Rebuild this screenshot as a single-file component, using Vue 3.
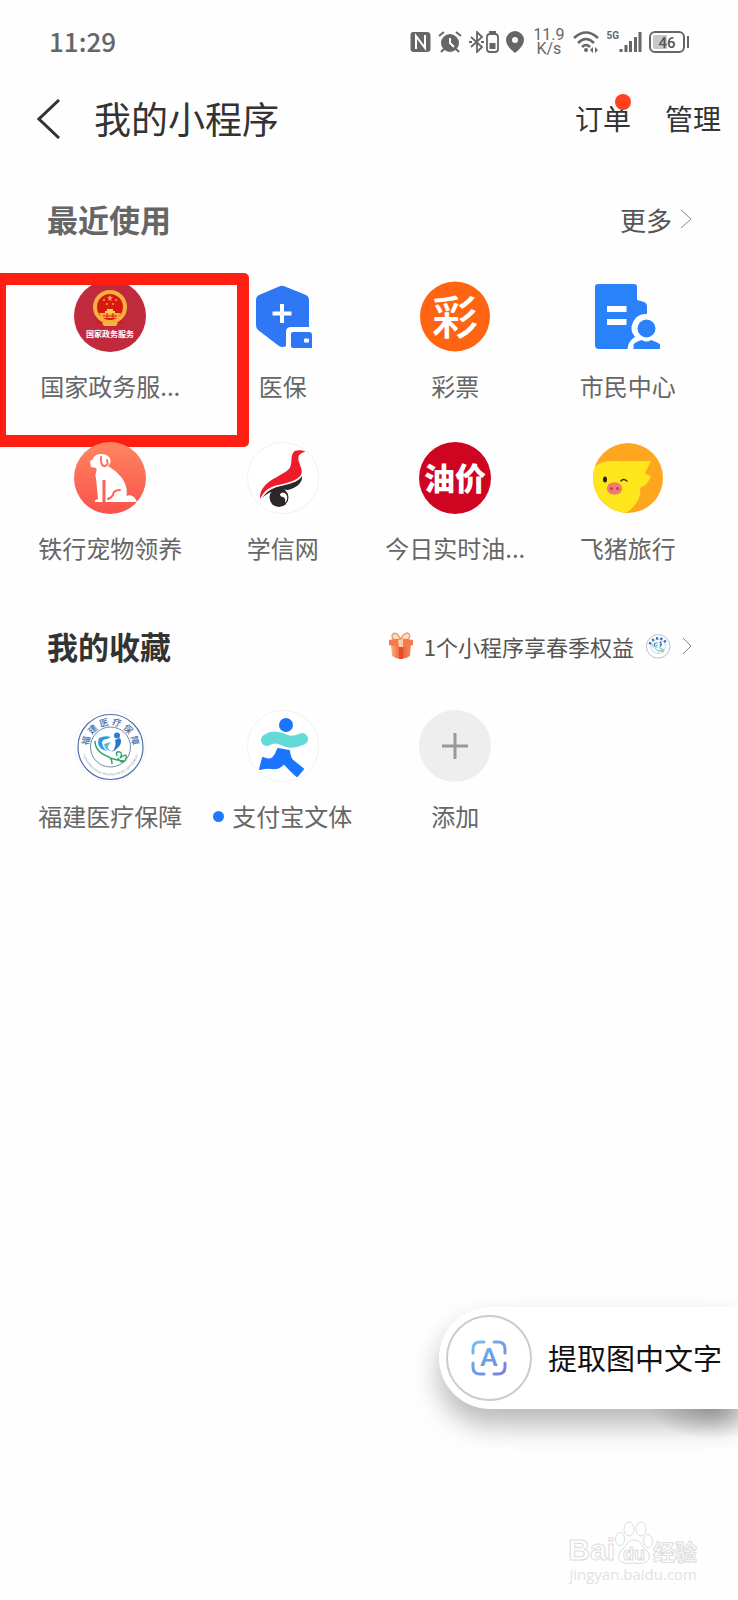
<script setup>
const recent = [
  { icon: 'gov', name: '国家政务服...', marked: true, text: '国家政务服务', x: 36, y: 57 },
  { icon: 'medical', name: '医保' },
  { icon: 'lottery', name: '彩票', text: '彩', x: 36, y: 54 },
  { icon: 'citizen', name: '市民中心' },
  { icon: 'pet', name: '铁行宠物领养' },
  { icon: 'xuexin', name: '学信网' },
  { icon: 'oil', name: '今日实时油...', text: '油价', x: 36, y: 48 },
  { icon: 'fliggy', name: '飞猪旅行' },
]
const favorites = [
  { icon: 'seal', name: '福建医疗保障' },
  { icon: 'sport', name: '支付宝文体', dot: true },
  { icon: 'add', name: '添加' },
]
const sealChars = [...'福建医疗保障'].map((c, i) => ({ c, angle: -75 + i * 30 }))
</script>

<template>
  <div class="page">
    <svg class="sprite" width="0" height="0" aria-hidden="true">
      <defs>
        <linearGradient id="petFill" x1="0" y1="0" x2="0" y2="1">
          <stop offset="0" stop-color="#ff8562" /><stop offset="1" stop-color="#f9524b" />
        </linearGradient>
        <linearGradient id="scanFill" gradientUnits="userSpaceOnUse" x1="0" y1="0" x2="30" y2="36">
          <stop offset="0" stop-color="#7fc4ea" /><stop offset="0.5" stop-color="#6ba0e8" /><stop offset="1" stop-color="#7f80d8" />
        </linearGradient>
        <linearGradient id="giftFill" x1="0" y1="0" x2="1" y2="0">
          <stop offset="0" stop-color="#f9b183" /><stop offset="0.5" stop-color="#ef5a35" /><stop offset="1" stop-color="#f58a62" />
        </linearGradient>
        <clipPath id="fliggyClip"><circle cx="36" cy="36" r="35" /></clipPath>
      </defs>

      <symbol id="gov" viewBox="0 0 72 72">
        <circle cx="36" cy="36" r="36" fill="#c02a3c" />
        <path d="M24 38 L22 44 L28 43 L31 46 H41 L44 43 L50 44 L48 38Z" fill="#cf1f1c" />
        <circle cx="36" cy="27" r="15" fill="#d8190f" stroke="#f7b13c" stroke-width="4" />
        <path d="M25 33 H47 L44 38 H28Z" fill="#f7b13c" />
        <path d="M31 33 V31 H33 V29 H39 V31 H41 V33Z" fill="#ffd34e" />
        <path d="M29 36 H43 M33 33 V39 M39 33 V39" stroke="#d8190f" stroke-width="1" />
        <path d="M28 43 Q32 40 36 43 Q40 40 44 43 L42 46 H30Z" fill="#f7b13c" />
        <path d="M36 15 l1 2 h2 l-2 2 1 2 -2-1 -2 1 1-2 -2-2 h2z" fill="#f9a23a" />
        <g fill="#f9a23a"><circle cx="30" cy="20" r="1" /><circle cx="42" cy="20" r="1" /><circle cx="33" cy="24" r="1" /><circle cx="39" cy="24" r="1" /></g>
      </symbol>

      <symbol id="medical" viewBox="0 0 72 72">
        <path d="M32 6.500 Q35 5 38 6.500 L59 15 Q62 16.500 62 20 V47 H44 Q39 47 39 52 V66 Q35 68 32 66 L11 50 Q9 48 9 45 V20 Q9 16.500 12 15Z" fill="#2f77f5" />
        <path d="M35 24 V43 M25.500 33.500 H44.500" stroke="#fff" stroke-width="4" />
        <path d="M46 52 H62 Q65 52 65 55 V68 H46 Q44 68 44 66 V54 Q44 52 46 52Z" fill="#2f77f5" />
        <rect x="57" y="58.500" width="5" height="4" rx="1" fill="#fff" />
      </symbol>

      <symbol id="lottery" viewBox="0 0 72 72">
        <circle cx="36" cy="36.500" r="35" fill="#fe6411" />
      </symbol>

      <symbol id="citizen" viewBox="0 0 72 72">
        <path d="M6 4 H42 Q45 4 45 7 V20 L52 22 Q55 23 55 27 V34 A14 14 0 0 0 43 57 Q36 61 35.500 69 H7 Q3 69 3 65 V7 Q3 4 6 4Z" fill="#2a82fb" />
        <path d="M15 26 H34.500 V32 H15Z M15 39 H34.500 V45 H15Z" fill="#fff" />
        <circle cx="54.500" cy="48.500" r="9" fill="#2a82fb" />
        <path d="M41.500 69 V65 Q41.500 64 43 63 Q47 60.500 50 60 Q54.500 63 59 60 Q63 61 67 63.500 Q68 64 68 65 V69Z" fill="#2a82fb" />
      </symbol>

      <symbol id="pet" viewBox="0 0 72 72">
        <circle cx="36" cy="36" r="36" fill="url(#petFill)" />
        <path d="M16 19 L19 17 C20 13.500 23 12 27 12 C33 12 37 15 36.500 20 C36 22 35 23 34 24 C42 29 49 35 51.500 43 C53 47 53 50 52.500 54 C57 52 61 55 63 60 H21 Q20 58 24 57 L22 36 C20 32 24 29 22 26 L17 25Z" fill="#fff" />
        <path d="M27 15 Q26 24 31 24 Q35 23 33 18" fill="none" stroke="#ff7159" stroke-width="2" stroke-linecap="round" />
        <path d="M30 38 V60" stroke="#fb6254" stroke-width="3" />
        <path d="M46 48 Q39 48 39 53 Q38 55 34 57" fill="none" stroke="#fb6254" stroke-width="2" stroke-linecap="round" />
      </symbol>

      <symbol id="xuexin" viewBox="0 0 72 72">
        <circle cx="36" cy="36" r="35.500" fill="#fff" stroke="#f1f1f1" />
        <path d="M58.500 9.500 C54 8 48 7.500 46 11 C43 16 46 22 42 27 C36 33 22 37 16 46 C13 50 13 54 13 57 C17 49 22 45 31 43 C40 41 50 39 54 33 C57 27 50 20 51.500 15 C52 12 55 11 58.500 9.500Z" fill="#ed1c28" />
        <path d="M15 56 C22 46 30 45 38 43 C46 41 52 39 55 34 C56 40 50 46 41 48 C32 47 22 49 15 56Z" fill="#2b2628" />
        <circle cx="32" cy="55.500" r="9.500" fill="#2b2628" />
        <path d="M33 52 Q36 49 39 52 Q42 56 38 61 Q39 56 36 55 Q33 55 33 52Z" fill="#fff" />
      </symbol>

      <symbol id="oil" viewBox="0 0 72 72">
        <circle cx="36" cy="36" r="36" fill="#cf0420" />
      </symbol>

      <symbol id="fliggy" viewBox="0 0 72 72">
        <g clip-path="url(#fliggyClip)">
          <rect width="72" height="72" fill="#ffa61f" />
          <path d="M0 29 Q4 20 18 19 Q40 19 59 19 L53 31 Q56 34 59 34 Q56 43 48 46 C50 55 43 66 32 72 H0Z" fill="#fee51c" />
        </g>
        <ellipse cx="13" cy="37.500" rx="2" ry="3" fill="#222" />
        <path d="M29 39 Q31 36 35 39" fill="none" stroke="#332" stroke-width="1.500" stroke-linecap="round" />
        <rect x="15" y="40.500" width="15" height="12" rx="6" fill="#ee7a72" />
        <circle cx="19.500" cy="46.500" r="1.500" fill="#c34340" /><circle cx="25.500" cy="46.500" r="1.500" fill="#c34340" />
      </symbol>

      <symbol id="seal" viewBox="0 0 72 72">
        <circle cx="36" cy="36" r="35.500" fill="#fff" stroke="#f1f5fa" />
        <circle cx="36.500" cy="37" r="32.500" fill="none" stroke="#4d70a8" stroke-width="1.200" />
        <circle cx="36.500" cy="37" r="20" fill="none" stroke="#7188a8" />
        <path d="M25 28 Q31 25 37 27 L33 29 Q29 29 28 32 Q28 37 33 41 Q24 39 24 32Z" fill="#2c9ae4" />
        <path d="M30 34 L37 32 L34 36 Q33 39 37 41 Q31 41 30 34Z" fill="#58b6ee" />
        <circle cx="43" cy="25.500" r="3" fill="#2580d8" />
        <path d="M46 28 Q50 35 38 42 Q43 36 41 30Z" fill="#2f74cc" />
        <path d="M21 31 Q21 42 35 47 Q38 49 38 54 M36 48 Q42 50 50 51 M43 46 Q41 41 46 42 Q49 44 46 48 Q55 41 51 51 Q47 54 44 48" fill="none" stroke="#2fa866" stroke-width="1.500" />
      </symbol>

      <symbol id="sport" viewBox="0 0 72 72">
        <circle cx="36" cy="36" r="35.500" fill="#fff" stroke="#f1f1f1" />
        <circle cx="39" cy="15" r="7" fill="#1a75ff" />
        <path d="M20 30 C28 25 34 29 40 31 Q47 33 55 29" fill="none" stroke="#63d9d8" stroke-width="12" stroke-linecap="round" />
        <path d="M31 39 L42 41 Q43 49 46 51 L56 59 L50 66 Q45 62 37 53 Q32 59 25 58 Q20 57 13 59 L16 48 Q22 51 26 48 Q29 45 31 39Z" fill="#1a75ff" stroke="#1a75ff" stroke-width="2" stroke-linejoin="round" />
      </symbol>

      <symbol id="add" viewBox="0 0 72 72">
        <circle cx="36" cy="36" r="36" fill="#eee" />
        <path d="M36 23 V49 M23 36 H49" stroke="#999" stroke-width="3" />
      </symbol>
    </svg>

    <div class="status">
      <time class="clock">11:29</time>
      <div class="indicators">
        <svg width="21" height="22" viewBox="0 0 21 22">
          <path d="M3 1 H17 Q20.500 1 20.500 5 V18 Q20.500 21 17 21 H4 Q0.500 21 0.500 18 V4 Q0.500 1 3 1Z" fill="#666" />
          <path d="M6 18 V5 L15 17 V4" fill="none" stroke="#fff" stroke-width="2" />
        </svg>
        <svg width="24" height="22" viewBox="0 0 24 22">
          <circle cx="12" cy="12" r="9" fill="#666" />
          <path d="M1 5 L6 1 M18 1 L23 5 M6 18 L3 21 M18 18 L21 21" stroke="#666" stroke-width="2" />
          <path d="M12 7 V12 L16 16" fill="none" stroke="#fff" stroke-width="2" />
        </svg>
        <svg width="30" height="22" viewBox="0 0 30 22">
          <path d="M2 6 L13 16 L8 21 V1 L13 6 L2 16" fill="none" stroke="#666" stroke-width="1.800" />
          <path d="M0 11 h3 M12 11 h3" stroke="#666" stroke-width="2" />
          <rect x="18" y="3" width="11" height="18" rx="3" fill="none" stroke="#666" stroke-width="1.800" />
          <path d="M20 1 H27" stroke="#666" stroke-width="2" /><rect x="20.500" y="12" width="6" height="6" fill="#666" />
        </svg>
        <svg width="18" height="22" viewBox="0 0 18 22">
          <path fill-rule="evenodd" d="M9 0 A9 9 0 0 1 18 9 Q18 15 9 22 Q0 15 0 9 A9 9 0 0 1 9 0Z M9 6 a3 3 0 1 0 0 6 a3 3 0 1 0 0-6Z" fill="#666" />
        </svg>
        <span class="speed">11.9<br />K/s</span>
        <svg width="26" height="22" viewBox="0 0 26 22">
          <path d="M1 7 Q13 -4 25 7 M5 12 Q13 4 21 12 M9 16 Q13 12 17 16" fill="none" stroke="#666" stroke-width="2.500" />
          <circle cx="13" cy="19" r="2" fill="#666" />
          <path d="M20 16 V22 L17 19Z M22 16 V22 L25 19Z" fill="#666" />
        </svg>
        <div class="cell">
          <span class="gen">5G</span>
          <svg width="23" height="22" viewBox="0 0 23 22">
            <path d="M2 18 V21 M7 14 V21 M11.500 10 V21 M16.500 6 V21 M21 1 V21" stroke="#666" stroke-width="3" />
          </svg>
        </div>
        <svg width="41" height="22" viewBox="0 0 41 22">
          <rect x="1" y="1" width="34" height="20" rx="5" fill="none" stroke="#666" stroke-width="2" />
          <path d="M6 4 H18 V18 H6 Q4 18 4 16 V6 Q4 4 6 4Z" fill="#c8c8c8" />
          <path d="M39 5 V17" stroke="#666" stroke-width="2" />
          <text x="18" y="17" text-anchor="middle" class="t-bat">46</text>
        </svg>
      </div>
    </div>

    <header class="nav">
      <button class="back" aria-label="返回">
        <svg width="24" height="40" viewBox="0 0 24 40"><path d="M22 1 L2 20 L22 39" fill="none" stroke="#333" stroke-width="3" /></svg>
      </button>
      <h1>我的小程序</h1>
      <button class="action">订单<i class="badge"></i></button>
      <button class="action">管理</button>
    </header>

    <main>
      <section>
        <div class="heading">
          <h2 class="muted">最近使用</h2>
          <a href="#" class="more">更多
            <svg width="12" height="20" viewBox="0 0 12 20"><path d="M1 1 L11 10 L1 19" fill="none" stroke="#888" /></svg>
          </a>
        </div>
        <div class="grid">
          <div v-for="a in recent" :key="a.icon" class="item">
            <button class="app">
              <svg class="icon" viewBox="0 0 72 72" aria-hidden="true">
                <use :href="'#' + a.icon" />
                <text v-if="a.text" :x="a.x" :y="a.y" text-anchor="middle" :class="'t-' + a.icon">{{ a.text }}</text>
              </svg>
              <span class="label">{{ a.name }}</span>
            </button>
            <i v-if="a.marked" class="mark"></i>
          </div>
        </div>
      </section>

      <section>
        <div class="heading second">
          <h2>我的收藏</h2>
          <a href="#" class="promo">
            <svg width="24" height="28" viewBox="0 0 24 28">
              <path d="M11 8 Q3 9 3 4 Q4 0 8 2 Q11 5 12 8 Q13 2 18 1 Q22 2 20 6 Q18 9 12 8Z" fill="#fbe0c0" stroke="#eda06f" stroke-width="1.500" />
              <path d="M2 12 H22 L21 24 Q12 30 3 24Z" fill="url(#giftFill)" />
              <path d="M0 8 Q12 5 24 8 V13 Q12 17 0 13Z" fill="#f47a50" />
              <path d="M9 8 L14 7 V15 H10Z" fill="#fbd0a8" /><path d="M10 15 H14 V27 H10Z" fill="#e84a2b" />
            </svg>
            <span>1个小程序享春季权益</span>
            <svg width="26" height="26" viewBox="0 0 72 72" aria-hidden="true">
              <use href="#seal" />
              <path d="M13 31 A25 25 0 0 1 60 31" fill="none" stroke="#4470ac" stroke-width="7" stroke-dasharray="6 6" />
            </svg>
            <svg width="10" height="18" viewBox="0 0 10 18"><path d="M1 1 L9 9 L1 17" fill="none" stroke="#888" /></svg>
          </a>
        </div>
        <div class="grid">
          <div v-for="a in favorites" :key="a.icon" class="item">
            <button class="app">
              <svg class="icon" viewBox="0 0 72 72" aria-hidden="true">
                <use :href="'#' + a.icon" />
                <g v-if="a.icon === 'seal'">
                  <text v-for="s in sealChars" :key="s.c" x="36.500" y="15" text-anchor="middle" class="t-seal" :transform="`rotate(${s.angle} 36.500 37)`">{{ s.c }}</text>
                  <path id="sealArc" d="M8 37 A28.500 28.500 0 0 0 65 37" fill="none" />
                  <text class="t-ring" text-anchor="middle"><textPath href="#sealArc" startOffset="50%">FUJIAN PROVINCIAL HEALTHCARE SECURITY BUREAU</textPath></text>
                </g>
              </svg>
              <span class="label"><i v-if="a.dot" class="dot"></i>{{ a.name }}</span>
            </button>
          </div>
        </div>
      </section>
    </main>

    <button class="extract">
      <span class="ring">
        <svg width="36" height="36" viewBox="0 0 36 36" fill="none" stroke="url(#scanFill)" stroke-width="3" stroke-linecap="round">
          <path d="M2 13 V9 Q2 2 9 2 H13 M23 2 H27 Q34 2 34 9 V13 M34 23 V27 Q34 34 27 34 H23 M13 34 H9 Q2 34 2 27 V23" />
          <text x="18" y="26" text-anchor="middle" class="t-scan">A</text>
        </svg>
      </span>
      <span class="caption">提取图中文字</span>
    </button>

    <div class="watermark" aria-hidden="true">
      <div class="brand">
        <b class="latin">Bai</b>
        <svg width="38" height="44" viewBox="0 0 38 44" fill="#fff" stroke="#dcdcdc">
          <ellipse cx="5" cy="18" rx="4.500" ry="6.500" /><ellipse cx="14" cy="8" rx="5" ry="7" />
          <ellipse cx="26" cy="8" rx="5" ry="7" /><ellipse cx="33" cy="20" rx="4.500" ry="6.500" />
          <path d="M19 19 Q25 19 28 26 Q36 32 34 38 Q31 44 19 42 Q7 44 4 38 Q2 32 10 26 Q13 19 19 19Z" />
          <text x="19" y="39" text-anchor="middle" class="t-du">du</text>
        </svg>
        <b class="han">经验</b>
      </div>
      <span class="site">jingyan.baidu.com</span>
    </div>
  </div>
</template>

<style>
body { margin: 0; background: #fefefe; }
</style>

<style scoped>
.page {
  position: relative;
  min-height: 100vh;
  overflow: hidden;
  background: #fefefe;
  color: #333;
  font-family: "Noto Sans CJK SC", sans-serif;
}
svg { display: block; flex: none; }
.sprite { position: absolute; }
button { border: 0; padding: 0; background: none; font: inherit; color: inherit; }
a { color: inherit; text-decoration: none; }
h1, h2 { margin: 0; }

.status {
  height: 84px;
  padding: 0 48px 0 49px;
  display: flex;
  align-items: center;
  justify-content: space-between;
  color: #666;
}
.clock { font-size: 26px; font-weight: 500; padding-bottom: 3px; }
.indicators { display: flex; align-items: center; gap: 7px; }
.speed { font: 16px/14px Roboto, sans-serif; text-align: center; padding: 0 2px; }
.cell { display: flex; align-items: flex-start; }
.gen { font: bold 10px/10px Roboto, sans-serif; }
.t-bat { font: 500 15px Roboto, sans-serif; fill: #555; }

.nav { height: 70px; display: flex; align-items: center; padding: 0 17px 0 37px; }
.nav h1 { flex: 1; margin-left: 33px; padding-bottom: 3px; font-size: 37px; font-weight: 400; line-height: 48px; }
.action { position: relative; font-size: 28px; line-height: 40px; margin-left: 34px; padding-bottom: 2px; }
.badge { position: absolute; top: -4px; right: 0; width: 16px; height: 16px; border-radius: 50%; background: #ff411c; }

.heading { display: flex; align-items: center; justify-content: space-between; height: 40px; margin: 45px 46px 41px 47px; }
.heading.second { margin-top: 62px; margin-bottom: 44px; }
.heading h2 { font-size: 31px; font-weight: 700; line-height: 40px; }
.heading .muted { color: #666; }
.more, .promo { display: flex; align-items: center; color: #555; }
.more { font-size: 26px; gap: 8px; }
.promo { font-size: 22px; gap: 11px; }

.grid { display: grid; grid-template-columns: repeat(4, 1fr); row-gap: 40px; margin: 0 24px; }
.item { position: relative; display: flex; justify-content: center; }
.app { display: flex; flex-direction: column; align-items: center; gap: 18px; }
.icon { width: 72px; height: 72px; }
.label { display: flex; align-items: center; gap: 8px; font-size: 24px; line-height: 32px; color: #666; white-space: nowrap; }
.dot { width: 11px; height: 11px; border-radius: 50%; background: #1f78ff; }
.mark { position: absolute; top: -7px; bottom: -45px; left: -30px; right: -52px; border: 12px solid #ff1f12; border-radius: 5px; }

.extract {
  position: absolute;
  right: 0;
  bottom: 191px;
  display: flex;
  align-items: center;
  gap: 16px;
  padding: 8px 16px 8px 7px;
  border-radius: 51px 0 0 51px;
  background: #fff;
  box-shadow: 0 16px 28px rgba(0, 0, 0, 0.28);
  font-size: 29px;
  color: #111;
}
.extract::after {
  content: "";
  position: absolute;
  top: 100%;
  right: 0;
  width: 90px;
  height: 30px;
  background: radial-gradient(ellipse at 70% 0, rgba(0, 0, 0, 0.22), transparent 70%);
}
.caption { padding-bottom: 3px; }
.ring { width: 82px; height: 82px; border: 2px solid #ccc; border-radius: 50%; display: grid; place-items: center; }

.watermark {
  position: absolute;
  right: 41px;
  bottom: 17px;
  display: flex;
  flex-direction: column;
  align-items: flex-end;
  color: #fff;
  -webkit-text-stroke: 1px #dcdcdc;
}
.brand { display: flex; align-items: flex-end; height: 44px; }
.latin { font: bold 30px/30px "Liberation Sans", sans-serif; }
.han { font-size: 22px; line-height: 30px; }
.site { font: 15px/18px "Open Sans", sans-serif; -webkit-text-stroke: 0; color: #e2e2e2; }

.t-gov { font-size: 8px; font-weight: 700; fill: #fff; }
.t-lottery { font-size: 46px; font-weight: 500; fill: #fff; }
.t-oil { font-size: 31px; font-weight: 900; fill: #fff; }
.t-seal { font-size: 9px; font-weight: 500; fill: #4470ac; }
.t-ring { font-size: 3px; fill: #8494a8; }
.t-scan { font: 900 24px Lato, sans-serif; fill: url(#scanFill); stroke: none; }
.t-du { font: bold 18px "Liberation Sans", sans-serif; }
</style>
